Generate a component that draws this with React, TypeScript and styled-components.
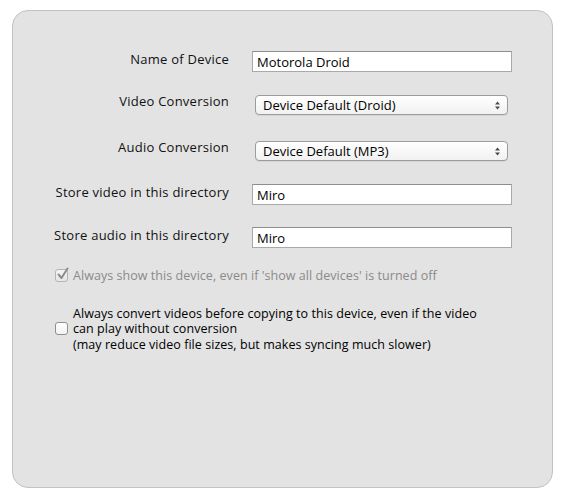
import React from "react";
import styled, { createGlobalStyle } from "styled-components";

const Global = createGlobalStyle`
  html, body { margin: 0; padding: 0; background: #ffffff; }
  body { font-family: "Open Sans", "DejaVu Sans", sans-serif; }
`;

const Panel = styled.div`
  box-sizing: border-box;
  margin: 10px 0 0 12px;
  width: 541px;
  height: 478px;
  background: #e3e3e3;
  border: 1px solid #c2c2c2;
  border-radius: 16px;
  padding-top: 40px;
  display: flex;
  flex-direction: column;
`;

const Row = styled.div<{ $gap: number }>`
  display: grid;
  grid-template-columns: 216px 260px;
  column-gap: 23px;
  align-items: start;
  margin-top: ${(p) => p.$gap}px;
`;

const Label = styled.div`
  text-align: right;
  font-size: 13px;
  letter-spacing: 0.25px;
  line-height: 16px;
  color: #111;
  white-space: nowrap;
`;

const TextField = styled.div`
  box-sizing: border-box;
  height: 21px;
  background: #fff;
  border: 1px solid #a9a9a9;
  border-top-color: #8e8e8e;
  padding: 0 4px;
  font-size: 13px;
  line-height: 20px;
  color: #000;
`;

const Select = styled.div`
  box-sizing: border-box;
  margin: 2px 0 0 3px;
  width: 253px;
  height: 20px;
  border: 1px solid #9c9c9c;
  border-radius: 4px;
  background: linear-gradient(#ffffff, #f1f1f1);
  box-shadow: 0 1px 0 rgba(0, 0, 0, 0.06);
  padding: 0 7px;
  display: flex;
  align-items: center;
  justify-content: space-between;
  font-size: 13px;
  line-height: 18px;
  color: #000;
`;

const Arrows = styled.svg`
  width: 5px;
  height: 9px;
  margin-right: 0px;
`;

const CheckRow = styled.div<{ $gap: number }>`
  display: flex;
  align-items: center;
  gap: 5px;
  padding-left: 42px;
  margin-top: ${(p) => p.$gap}px;
`;

const Box = styled.div<{ $disabled?: boolean }>`
  box-sizing: border-box;
  flex: none;
  width: 13px;
  height: 13px;
  border-radius: 3px;
  border: 1px solid ${(p) => (p.$disabled ? "#b5b5b5" : "#8f8f8f")};
  background: ${(p) =>
    p.$disabled ? "linear-gradient(#f4f4f4, #e6e6e6)" : "linear-gradient(#ffffff, #f2f2f2)"};
  position: relative;
`;

const Tick = styled.svg`
  position: absolute;
  left: 0px;
  top: -3px;
  width: 13px;
  height: 14px;
`;

const CheckText = styled.div<{ $muted?: boolean }>`
  font-size: 12.5px;
  letter-spacing: 0.05px;
  line-height: 15.5px;
  white-space: nowrap;
  color: ${(p) => (p.$muted ? "#8a8a8a" : "#000")};
`;

function SelectBox({ value }: { value: string }) {
  return (
    <Select>
      <span>{value}</span>
      <Arrows viewBox="0 0 5 9">
        <path d="M2.5 0.5 L5 3.5 H0 Z" fill="#4a4a4a" />
        <path d="M0 5.5 H5 L2.5 8.5 Z" fill="#4a4a4a" />
      </Arrows>
    </Select>
  );
}

export default function App() {
  return (
    <>
      <Global />
      <Panel>
        <Row $gap={0}>
          <Label>Name of Device</Label>
          <TextField>Motorola Droid</TextField>
        </Row>
        <Row $gap={21}>
          <Label>Video Conversion</Label>
          <SelectBox value="Device Default (Droid)" />
        </Row>
        <Row $gap={24}>
          <Label>Audio Conversion</Label>
          <SelectBox value="Device Default (MP3)" />
        </Row>
        <Row $gap={23}>
          <Label>Store video in this directory</Label>
          <TextField>Miro</TextField>
        </Row>
        <Row $gap={22}>
          <Label>Store audio in this directory</Label>
          <TextField>Miro</TextField>
        </Row>
        <CheckRow $gap={20}>
          <Box $disabled>
            <Tick viewBox="0 0 13 14">
              <path
                d="M2.5 7.5 L5.5 11 L11.5 1.5"
                fill="none"
                stroke="#8c8c8c"
                strokeWidth="2"
                strokeLinecap="round"
                strokeLinejoin="round"
              />
            </Tick>
          </Box>
          <CheckText $muted>Always show this device, even if 'show all devices' is turned off</CheckText>
        </CheckRow>
        <CheckRow $gap={22}>
          <Box />
          <CheckText>
            Always convert videos before copying to this device, even if the video
            <br />
            can play without conversion
            <br />
            (may reduce video file sizes, but makes syncing much slower)
          </CheckText>
        </CheckRow>
      </Panel>
    </>
  );
}
